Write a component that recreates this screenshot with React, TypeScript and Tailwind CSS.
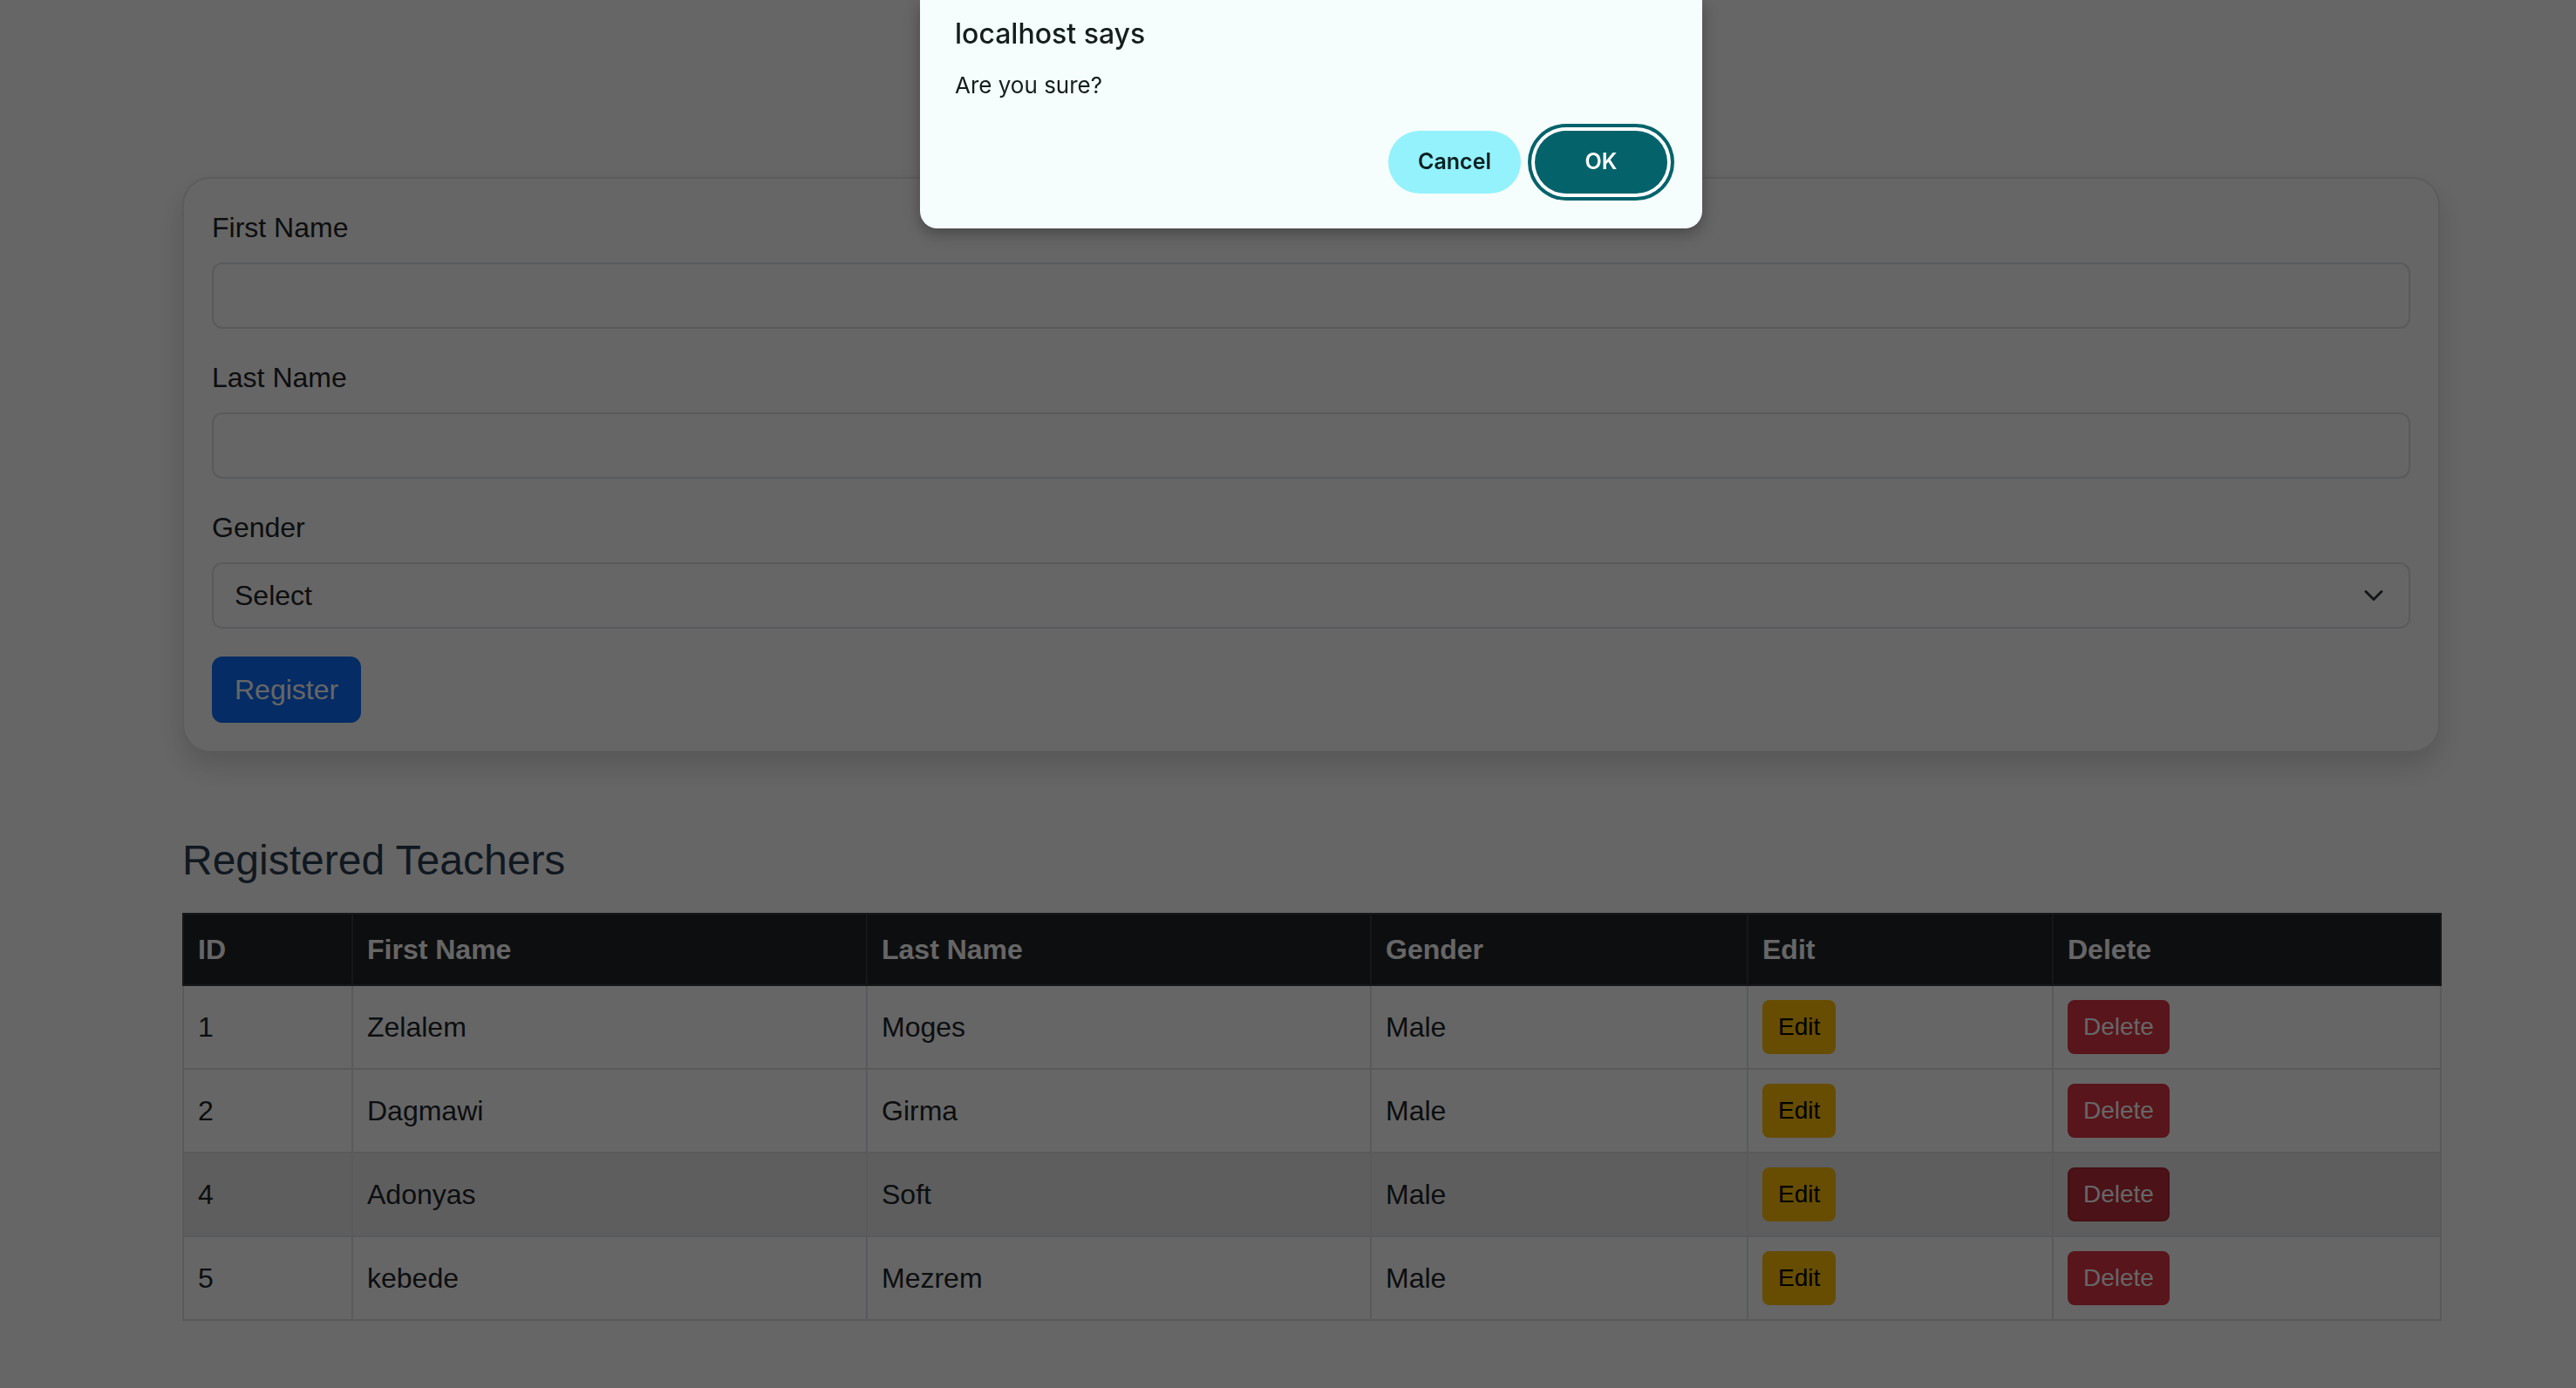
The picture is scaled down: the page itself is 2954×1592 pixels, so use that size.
import React from 'react'

const teachers = [
  { id: 1, first: 'Zelalem', last: 'Moges', gender: 'Male' },
  { id: 2, first: 'Dagmawi', last: 'Girma', gender: 'Male' },
  { id: 4, first: 'Adonyas', last: 'Soft', gender: 'Male', hover: true },
  { id: 5, first: 'kebede', last: 'Mezrem', gender: 'Male' },
]

function Field({ label, children }: { label: string; children: React.ReactNode }) {
  return (
    <div className="mb-[32px]">
      <label className="mb-[16px] block text-[32px] leading-[48px]">{label}</label>
      {children}
    </div>
  )
}

export default function App() {
  return (
    <div className="relative min-h-screen bg-white font-['Liberation_Sans',Helvetica,Arial,sans-serif] text-[#212529]">
      {/* page */}
      <div className="pl-[53px] pt-[203px] pb-[80px]">
        <div className="mx-auto w-[2589px]">
          {/* Form card */}
          <div className="rounded-[32px] border-2 border-black/10 bg-white p-[32px] shadow-[0_16px_32px_rgba(0,0,0,0.15)]">
            <Field label="First Name">
              <div className="h-[76px] w-full rounded-[12px] border-2 border-[#dee2e6] bg-white" />
            </Field>
            <Field label="Last Name">
              <div className="h-[76px] w-full rounded-[12px] border-2 border-[#dee2e6] bg-white" />
            </Field>
            <Field label="Gender">
              <div className="flex h-[76px] w-full items-center justify-between rounded-[12px] border-2 border-[#dee2e6] bg-white pl-[24px] pr-[24px] text-[32px]">
                <span>Select</span>
                <svg className="h-[24px] w-[32px]" viewBox="0 0 16 16" fill="none">
                  <path d="m2 5 6 6 6-6" stroke="#343a40" strokeWidth="2" strokeLinecap="round" strokeLinejoin="round" />
                </svg>
              </div>
            </Field>
            <button className="rounded-[12px] border-2 border-[#0d6efd] bg-[#0d6efd] px-[24px] py-[12px] text-[32px] leading-[48px] text-white">
              Register
            </button>
          </div>

          <h4 className="mt-[96px] mb-[32px] text-[48px] font-medium leading-[56px] text-[#2c3e50]">Registered Teachers</h4>

          <table className="w-full table-fixed border-collapse border-2 border-[#dee2e6] text-left text-[32px]">
            <colgroup>
              <col className="w-[194px]" />
              <col className="w-[590px]" />
              <col className="w-[578px]" />
              <col className="w-[432px]" />
              <col className="w-[350px]" />
              <col className="w-[445px]" />
            </colgroup>
            <thead>
              <tr className="bg-[#212529] text-white">
                {['ID', 'First Name', 'Last Name', 'Gender', 'Edit', 'Delete'].map((h) => (
                  <th key={h} className="border-2 border-[#373b3e] px-[16px] py-[16px] align-middle font-bold leading-[48px]">
                    {h}
                  </th>
                ))}
              </tr>
            </thead>
            <tbody>
              {teachers.map((t) => (
                <tr key={t.id} className={t.hover ? 'bg-[#ececec]' : 'bg-white'}>
                  <td className="border-2 border-[#dee2e6] px-[16px] py-[16px] align-middle leading-[48px]">{t.id}</td>
                  <td className="border-2 border-[#dee2e6] px-[16px] py-[16px] align-middle leading-[48px]">{t.first}</td>
                  <td className="border-2 border-[#dee2e6] px-[16px] py-[16px] align-middle leading-[48px]">{t.last}</td>
                  <td className="border-2 border-[#dee2e6] px-[16px] py-[16px] align-middle leading-[48px]">{t.gender}</td>
                  <td className="border-2 border-[#dee2e6] px-[16px] py-[16px] align-middle">
                    <div className="flex">
                      <button className="rounded-[8px] border-2 border-[#ffc107] bg-[#ffc107] px-[16px] py-[8px] text-[28px] leading-[42px] text-black">
                        Edit
                      </button>
                    </div>
                  </td>
                  <td className="border-2 border-[#dee2e6] px-[16px] py-[16px] align-middle">
                    <div className="flex">
                      <button
                        className={
                          t.hover
                            ? 'rounded-[8px] border-2 border-[#b02a37] bg-[#bb2d3b] px-[16px] py-[8px] text-[28px] leading-[42px] text-white'
                            : 'rounded-[8px] border-2 border-[#dc3545] bg-[#dc3545] px-[16px] py-[8px] text-[28px] leading-[42px] text-white'
                        }
                      >
                        Delete
                      </button>
                    </div>
                  </td>
                </tr>
              ))}
            </tbody>
          </table>
        </div>
      </div>

      {/* modal backdrop */}
      <div className="fixed inset-0 bg-black/60" />

      {/* browser confirm dialog */}
      <div className="fixed inset-x-0 top-0 flex justify-center pl-[53px]">
        <div className="w-[897px] rounded-b-[20px] bg-[#f5fdfd] px-[40px] pt-[20px] pb-[40px] font-['Inter','Noto_Sans',sans-serif] text-[#161d1d] shadow-[0_6px_18px_rgba(0,0,0,0.3)]">
          <div className="text-[32px] font-medium leading-[38px]">localhost says</div>
          <div className="mt-[24px] text-[26px] leading-[32px]">Are you sure?</div>
          <div className="mt-[36px] flex justify-end gap-[16px]">
            <button className="h-[72px] w-[152px] rounded-full bg-[#93f2fb] text-[25px] font-semibold text-[#0a1f21]">
              Cancel
            </button>
            <button className="h-[72px] w-[152px] rounded-full bg-[#04636a] text-[25px] font-semibold text-white ring-4 ring-[#04636a] ring-offset-4 ring-offset-white">
              OK
            </button>
          </div>
        </div>
      </div>
    </div>
  )
}
